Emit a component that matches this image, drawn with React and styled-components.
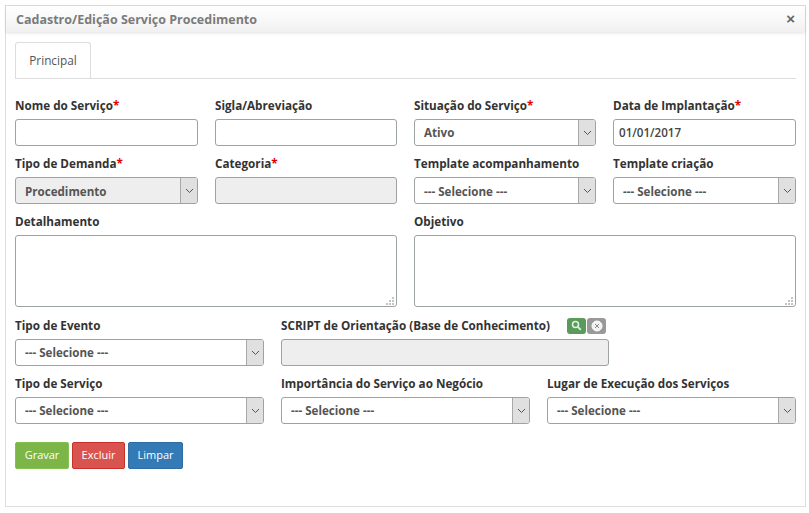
import React from "react"
import styled, { createGlobalStyle } from "styled-components"

const GlobalStyle = createGlobalStyle`
  html, body {
    margin: 0;
    padding: 0;
    background: #fff;
    font-family: "Open Sans", "Liberation Sans", sans-serif;
  }
`

const Panel = styled.div`
  box-sizing: border-box;
  width: 801px;
  height: 502px;
  margin: 5px 0 0 5px;
  border: 1px solid #ddd;
  background: #fff;
`

const TitleBar = styled.div`
  display: flex;
  align-items: center;
  justify-content: space-between;
  height: 26px;
  padding: 0 10px;
  background: linear-gradient(#fff, #f1f1f1);
  box-shadow: 0 1px 3px rgba(0, 0, 0, 0.12);
`

const Title = styled.div`
  font-size: 12.5px;
  font-weight: 700;
  color: #7b7b7b;
`

const Close = styled.div`
  font-family: "Liberation Sans", sans-serif;
  font-size: 15px;
  font-weight: 700;
  line-height: 14px;
  color: #666;
`

const Body = styled.div`
  padding: 10px 9px 0;
`

const Tabs = styled.div`
  display: flex;
  height: 36px;
  border-bottom: 1px solid #ddd;
`

const Tab = styled.div`
  box-sizing: border-box;
  width: 76px;
  height: 36px;
  border: 1px solid #ddd;
  border-bottom: 0;
  border-radius: 3px 3px 0 0;
  font-size: 11.8px;
  line-height: 35px;
  text-align: center;
  color: #555;
`

const Grid = styled.div`
  display: grid;
  grid-template-columns: ${p => p.$cols};
  column-gap: 17px;
  margin-top: ${p => p.$top || 0}px;
`

const Field = styled.div`
  grid-column: span ${p => p.$span || 1};
  min-width: 0;
  width: ${p => (p.$width ? `${p.$width}px` : "auto")};
`

const LabelRow = styled.div`
  display: flex;
  align-items: center;
  height: 17px;
  margin-bottom: 5px;
`

const Label = styled.label`
  font-size: 11.7px;
  font-weight: 700;
  line-height: 17px;
  color: #333;
  white-space: nowrap;
`

const Req = styled.span`
  color: #e00000;
`

const Input = styled.div`
  box-sizing: border-box;
  height: 27px;
  padding: 0 5px;
  border: 1px solid #9da2a2;
  border-radius: 3px;
  background: ${p => (p.$disabled ? "#eee" : "#fff")};
  font-size: 11.6px;
  font-weight: 600;
  line-height: 25px;
  color: #444;
`

const Area = styled.div`
  position: relative;
  box-sizing: border-box;
  height: 72px;
  border: 1px solid #9da2a2;
  border-radius: 3px;
  background: #fff;
`

const Grip = styled.svg`
  position: absolute;
  right: 2px;
  bottom: 1px;
`

const SelectBox = styled.div`
  display: flex;
  box-sizing: border-box;
  height: 27px;
  border: 1px solid #9da2a2;
  border-radius: 3px;
  overflow: hidden;
  background: ${p => (p.$disabled ? "#eee" : "#fff")};
`

const SelectText = styled.div`
  flex: 1;
  padding-left: 9px;
  padding-top: ${p => (p.$low ? 1 : 0)}px;
  font-size: 11.6px;
  font-weight: 700;
  line-height: 25px;
  color: #555;
`

const Arrow = styled.div`
  display: flex;
  align-items: center;
  justify-content: center;
  width: 16px;
  border-left: 1px solid #a5a9a9;
  background: #e0e0e0;
`

const IconButton = styled.div`
  display: flex;
  align-items: center;
  justify-content: center;
  width: 19px;
  height: 16px;
  border-radius: 3px;
  background: ${p => p.$bg};
`

const Icons = styled.div`
  display: flex;
  gap: 1px;
  margin-left: 17px;
`

const Buttons = styled.div`
  display: flex;
  gap: 3px;
  margin-top: 18px;
`

const Button = styled.button`
  box-sizing: border-box;
  height: 27px;
  width: ${p => p.$w}px;
  padding: 0 0 2px;
  border: 1px solid ${p => p.$border};
  border-radius: 2px;
  background: ${p => p.$bg};
  color: #fff;
  font-family: "Open Sans", sans-serif;
  font-size: 11px;
`

const Chevron = () => (
  <svg width="9" height="6" viewBox="0 0 9 6">
    <path d="M1 1l3.5 3.5L8 1" fill="none" stroke="#555" strokeWidth="1" />
  </svg>
)

const Select = ({ value, disabled, low }) => (
  <SelectBox $disabled={disabled}>
    <SelectText $low={low}>{value}</SelectText>
    <Arrow><Chevron /></Arrow>
  </SelectBox>
)

const Text = ({ label, required }) => (
  <LabelRow>
    <Label>{label}{required && <Req>*</Req>}</Label>
  </LabelRow>
)

const TextArea = () => (
  <Area>
    <Grip width="8" height="8" viewBox="0 0 8 8">
      <path d="M6 0h2v2H6zM3 3h2v2H3zM6 3h2v2H6zM0 6h2v2H0zM3 6h2v2H3zM6 6h2v2H6z" fill="#c4c4c4" />
    </Grip>
  </Area>
)

const SELECIONE = "--- Selecione ---"
const FOUR = "183px 182px 182px 183px"
const THREE = "repeat(3, 249px)"

const App = () => (
  <>
    <GlobalStyle />
    <Panel>
      <TitleBar>
        <Title>Cadastro/Edição Serviço Procedimento</Title>
        <Close>×</Close>
      </TitleBar>
      <Body>
        <Tabs><Tab>Principal</Tab></Tabs>

        <Grid $cols={FOUR} $top={18}>
          <Field><Text label="Nome do Serviço" required /><Input /></Field>
          <Field><Text label="Sigla/Abreviação" /><Input /></Field>
          <Field><Text label="Situação do Serviço" required /><Select value="Ativo" /></Field>
          <Field><Text label="Data de Implantação" required /><Input>01/01/2017</Input></Field>
        </Grid>

        <Grid $cols={FOUR} $top={9}>
          <Field><Text label="Tipo de Demanda" required /><Select value="Procedimento" disabled low /></Field>
          <Field><Text label="Categoria" required /><Input $disabled /></Field>
          <Field><Text label="Template acompanhamento" /><Select value={SELECIONE} low /></Field>
          <Field><Text label="Template criação" /><Select value={SELECIONE} low /></Field>
        </Grid>

        <Grid $cols={FOUR} $top={9}>
          <Field $span={2}><Text label="Detalhamento" /><TextArea /></Field>
          <Field $span={2}><Text label="Objetivo" /><TextArea /></Field>
        </Grid>

        <Grid $cols={THREE} $top={10}>
          <Field><Text label="Tipo de Evento" /><Select value={SELECIONE} /></Field>
          <Field $span={2} $width={328}>
            <LabelRow>
              <Label>SCRIPT de Orientação (Base de Conhecimento)</Label>
              <Icons>
                <IconButton $bg="#5a9a5a">
                  <svg width="11" height="11" viewBox="0 0 11 11">
                    <circle cx="4.5" cy="4.5" r="3" fill="none" stroke="#dff5e0" strokeWidth="1.5" />
                    <path d="M6.8 6.8l3 3" stroke="#dff5e0" strokeWidth="1.8" />
                  </svg>
                </IconButton>
                <IconButton $bg="#999">
                  <svg width="12" height="12" viewBox="0 0 12 12">
                    <circle cx="6" cy="6" r="5" fill="#f2f2f2" stroke="#fff" strokeWidth="1" />
                    <path d="M4 4l4 4M8 4l-4 4" stroke="#8a8a8a" strokeWidth="1" />
                  </svg>
                </IconButton>
              </Icons>
            </LabelRow>
            <Input $disabled />
          </Field>
        </Grid>

        <Grid $cols={THREE} $top={9}>
          <Field><Text label="Tipo de Serviço" /><Select value={SELECIONE} /></Field>
          <Field><Text label="Importância do Serviço ao Negócio" /><Select value={SELECIONE} /></Field>
          <Field><Text label="Lugar de Execução dos Serviços" /><Select value={SELECIONE} /></Field>
        </Grid>

        <Buttons>
          <Button $w={54} $bg="#7cb548" $border="#86c04f">Gravar</Button>
          <Button $w={53} $bg="#d9534f" $border="#c9302c">Excluir</Button>
          <Button $w={55} $bg="#337ab7" $border="#2e6da4">Limpar</Button>
        </Buttons>
      </Body>
    </Panel>
  </>
)

export default App
